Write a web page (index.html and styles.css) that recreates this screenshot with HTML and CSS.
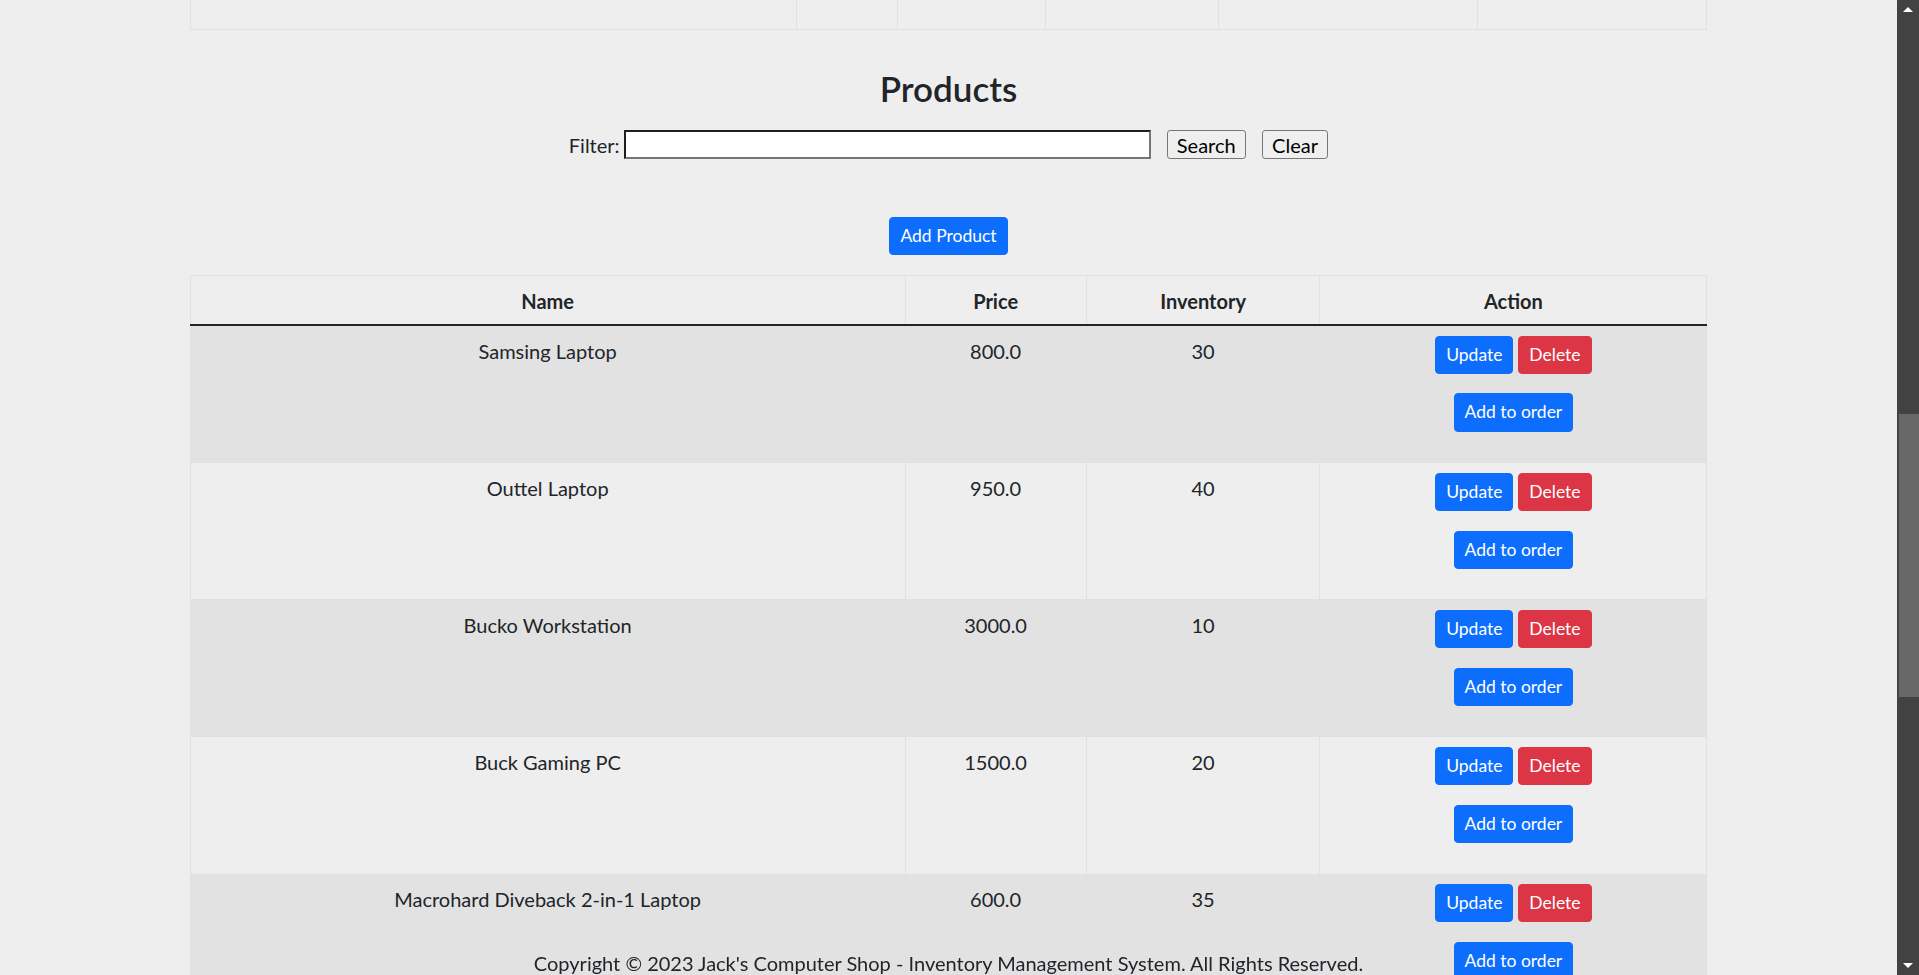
FILE: index.html
```html
<!DOCTYPE html>
<html lang="en">
<head>
<meta charset="utf-8">
<title>Jack's Computer Shop - Inventory Management System</title>
<link rel="stylesheet" href="styles.css">
</head>
<body>
  <table class="sheet parts">
    <colgroup>
      <col class="pc1"><col class="pc2"><col class="pc3"><col class="pc4"><col class="pc5"><col class="pc6">
    </colgroup>
    <tbody>
      <tr>
        <td class="pcell"></td><td class="pcell"></td><td class="pcell"></td><td class="pcell"></td><td class="pcell"></td><td class="pcell"></td>
      </tr>
    </tbody>
  </table>

  <main class="products">
    <h3 class="products-title">Products</h3>
    <form class="filter">
      <label class="filter-label" for="keyword">Filter:</label>
      <input class="filter-input" id="keyword" type="text">
      <button class="plain-btn" type="button">Search</button>
      <button class="plain-btn" type="button">Clear</button>
    </form>

    <div class="add-row">
      <a class="btn btn-primary">Add Product</a>
    </div>

    <table class="sheet products-table">
      <colgroup>
        <col class="c-name"><col class="c-price"><col class="c-inv"><col class="c-action">
      </colgroup>
      <thead>
        <tr>
          <th>Name</th>
          <th>Price</th>
          <th>Inventory</th>
          <th>Action</th>
        </tr>
      </thead>
      <tbody>
        <tr>
          <td>Samsing Laptop</td>
          <td>800.0</td>
          <td>30</td>
          <td>
            <div class="actions-top"><a class="btn btn-primary">Update</a><a class="btn btn-danger">Delete</a></div>
            <div class="actions-bottom"><a class="btn btn-primary">Add to order</a></div>
          </td>
        </tr>
        <tr>
          <td>Outtel Laptop</td>
          <td>950.0</td>
          <td>40</td>
          <td>
            <div class="actions-top"><a class="btn btn-primary">Update</a><a class="btn btn-danger">Delete</a></div>
            <div class="actions-bottom"><a class="btn btn-primary">Add to order</a></div>
          </td>
        </tr>
        <tr>
          <td>Bucko Workstation</td>
          <td>3000.0</td>
          <td>10</td>
          <td>
            <div class="actions-top"><a class="btn btn-primary">Update</a><a class="btn btn-danger">Delete</a></div>
            <div class="actions-bottom"><a class="btn btn-primary">Add to order</a></div>
          </td>
        </tr>
        <tr>
          <td>Buck Gaming PC</td>
          <td>1500.0</td>
          <td>20</td>
          <td>
            <div class="actions-top"><a class="btn btn-primary">Update</a><a class="btn btn-danger">Delete</a></div>
            <div class="actions-bottom"><a class="btn btn-primary">Add to order</a></div>
          </td>
        </tr>
        <tr>
          <td>Macrohard Diveback 2-in-1 Laptop</td>
          <td>600.0</td>
          <td>35</td>
          <td>
            <div class="actions-top"><a class="btn btn-primary">Update</a><a class="btn btn-danger">Delete</a></div>
            <div class="actions-bottom"><a class="btn btn-primary">Add to order</a></div>
          </td>
        </tr>
      </tbody>
    </table>
  </main>

  <footer class="footer">Copyright © 2023 Jack's Computer Shop - Inventory Management System. All Rights Reserved.</footer>

  <div class="scrollbar" aria-hidden="true">
    <span class="sb-arrow sb-up"></span>
    <span class="sb-thumb"></span>
    <span class="sb-arrow sb-down"></span>
  </div>
</body>
</html>
```

FILE: styles.css
```css
html {
  zoom: 1.25;
}

body {
  margin: 0 17.6px 0 0;
  padding-bottom: 24px;
  background: #eeeeee;
  color: #212529;
  font-family: Lato, "Open Sans", "Liberation Sans", sans-serif;
  font-size: 16px;
  line-height: 1.5;
}

.sheet {
  width: 80%;
  margin: 0 auto;
  border-collapse: collapse;
  table-layout: fixed;
}

/* end of the parts table above */
.pc1 { width: 484.6px; }
.pc2 { width: 81.3px; }
.pc3 { width: 118.5px; }
.pc4 { width: 138px; }
.pc5 { width: 207.6px; }
.pc6 { width: 183.1px; }

.pcell {
  height: 23px;
  padding: 0;
  border: 1px solid #dee2e6;
  border-top: 0;
}

.products-title {
  margin: 30px 0 0;
  font-size: 28px;
  font-weight: 600;
  line-height: 1.2;
  text-align: center;
  color: #212529;
}

.filter {
  display: flex;
  justify-content: center;
  align-items: center;
  height: 23.5px;
  margin: 16.5px 0 0;
}

.filter-label {
  margin-right: 3.9px;
  color: #212529;
}

.filter-input {
  box-sizing: border-box;
  width: 421px;
  height: 23.5px;
  margin: 0;
  padding: 1px 2px;
  border: 2px solid;
  border-color: #1e1e1e #767676 #767676 #1e1e1e;
  background: #ffffff;
  color: #000000;
  font: inherit;
}

.plain-btn {
  box-sizing: border-box;
  height: 23.5px;
  margin: 0 0 0 12.7px;
  padding: 0 7.4px;
  border: 1px solid #767676;
  border-radius: 2.5px;
  background: #efefef;
  color: #000000;
  font-family: inherit;
  font-size: 16px;
  line-height: 1;
}

.add-row {
  display: flex;
  justify-content: center;
  margin-top: 46px;
}

.btn {
  display: inline-block;
  padding: 4px 8px;
  border: 1px solid transparent;
  border-radius: 3.2px;
  font-size: 14px;
  line-height: 1.5;
  font-weight: 400;
  color: #ffffff;
  text-decoration: none;
  cursor: pointer;
}

.btn-primary {
  background: #0d6efd;
  border-color: #0d6efd;
}

.btn-danger {
  background: #dc3545;
  border-color: #dc3545;
}

.products-table {
  margin-top: 16px;
}

.c-name { width: 571.8px; }
.c-price { width: 144.9px; }
.c-inv { width: 187px; }
.c-action { width: 309.4px; }

.products-table th,
.products-table td {
  padding: 8px;
  border: 1px solid #dee2e6;
  text-align: center;
  vertical-align: top;
  color: #212529;
}

.products-table th {
  padding-bottom: 6.4px;
  font-weight: 700;
  border-bottom: 2px solid #212529;
}

.products-table td {
  padding-top: 7.6px;
}

.products-table tbody tr:nth-child(odd) td {
  background: #e2e2e2;
}

.actions-top {
  display: flex;
  justify-content: center;
  gap: 3.9px;
  margin-bottom: 15.7px;
}

.actions-bottom {
  display: flex;
  justify-content: center;
  margin-bottom: 16.4px;
}

.footer {
  position: fixed;
  left: 0;
  right: 17.6px;
  bottom: -2px;
  text-align: center;
  line-height: 24px;
  color: #212529;
}

/* window scrollbar (page is scrolled to the products section) */
.scrollbar {
  position: fixed;
  top: 0;
  right: 0;
  bottom: 0;
  width: 17.6px;
  background: #424242;
}

.sb-thumb {
  position: absolute;
  top: 331.2px;
  left: 1.6px;
  right: 0;
  height: 226.4px;
  background: #686868;
}

.sb-arrow {
  position: absolute;
  left: 4.8px;
  width: 0;
  height: 0;
  border-left: 4px solid transparent;
  border-right: 4px solid transparent;
}

.sb-up {
  top: 5.6px;
  border-bottom: 4px solid #ffffff;
}

.sb-down {
  bottom: 5.6px;
  border-top: 4px solid #ffffff;
}
```
